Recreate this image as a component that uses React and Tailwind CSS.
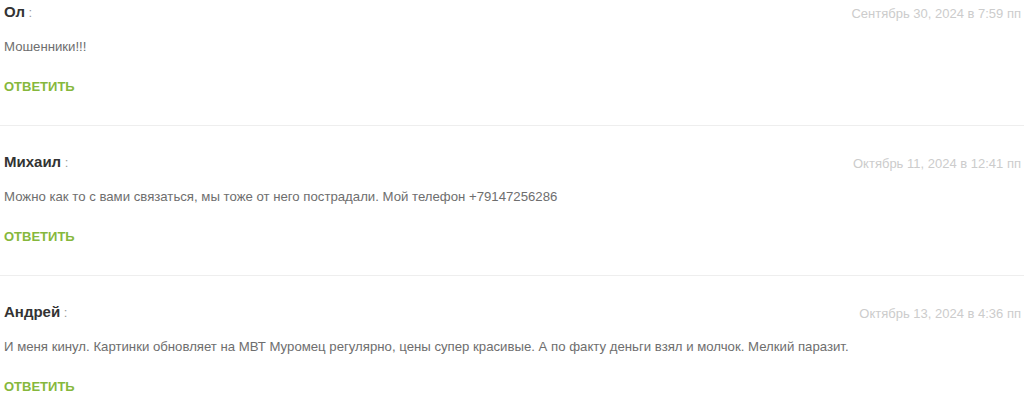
const comments = [
    {
        name: 'Ол',
        date: 'Сентябрь 30, 2024 в 7:59 пп',
        text: 'Мошенники!!!',
    },
    {
        name: 'Михаил',
        date: 'Октябрь 11, 2024 в 12:41 пп',
        text: 'Можно как то с вами связаться, мы тоже от него пострадали. Мой телефон +79147256286',
    },
    {
        name: 'Андрей',
        date: 'Октябрь 13, 2024 в 4:36 пп',
        text: 'И меня кинул. Картинки обновляет на МВТ Муромец регулярно, цены супер красивые. А по факту деньги взял и молчок. Мелкий паразит.',
    },
]

const Comment = ({ c, last }) => (
    <div className={`pl-1 pr-[3px] pb-[29px] ${last ? '' : 'border-b border-[#eeeeee] mb-6'}`}>
        <div className="flex items-baseline justify-between h-6">
            <div className="text-[15px] leading-6">
                <span className="font-bold text-[#333333]">{c.name}</span>
                <span className="text-[#999999] text-[13px]"> :</span>
            </div>
            <span className="text-[13px] leading-6 text-[#cccccc] relative top-[1px]">{c.date}</span>
        </div>
        <p className="mt-[14px] text-[13.2px] leading-[18px] text-[#6e6e6e]">{c.text}</p>
        <a href="#" className="block mt-[22px] text-[13px] leading-[18px] font-bold text-[#86b83c] uppercase">
            Ответить
        </a>
    </div>
)

export default function App() {
    return (
        <div className="w-[1024px] h-[396px] overflow-hidden bg-white font-['Liberation_Sans',Arial,sans-serif]">
            {comments.map((c, i) => (
                <Comment key={i} c={c} last={i === comments.length - 1} />
            ))}
        </div>
    )
}
